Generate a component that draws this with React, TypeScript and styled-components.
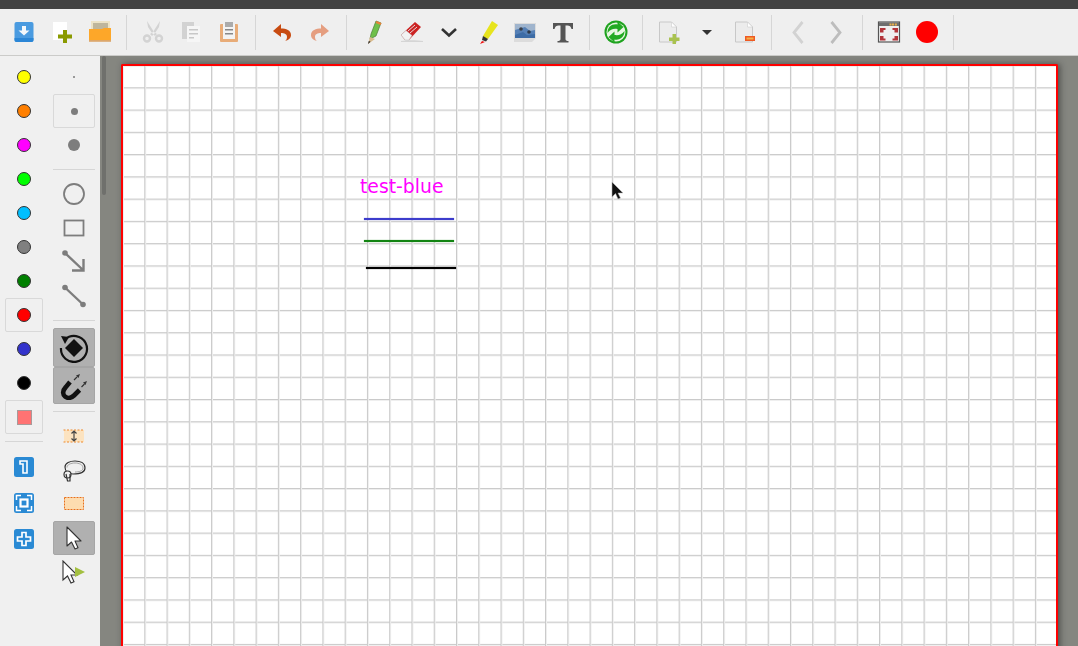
import React from "react";
import styled, { createGlobalStyle } from "styled-components";

const Global = createGlobalStyle`
  html, body { margin: 0; padding: 0; width: 1078px; height: 646px; overflow: hidden; background: #858680; }
  #root { width: 1078px; height: 646px; overflow: hidden; }
  svg { display: block; }
`;

const Page = styled.div`
  display: flex;
  flex-direction: column;
  width: 1078px;
  height: 646px;
  overflow: hidden;
  font-family: "DejaVu Sans", sans-serif;
`;
const TitleBar = styled.div`
  height: 9px;
  flex: none;
  background: #424242;
`;
const Toolbar = styled.div`
  display: flex;
  flex: none;
  height: 47px;
  box-sizing: border-box;
  padding-left: 5px;
  align-items: center;
  background: #efefef;
  border-bottom: 1px solid #cbcbc9;
`;
const ToolButton = styled.div`
  display: flex;
  flex: none;
  width: 38px;
  height: 34px;
  align-items: center;
  justify-content: center;
`;
const ToolSep = styled.div`
  flex: none;
  width: 1px;
  height: 35px;
  margin: 0 7px;
  background: #d6d6d6;
`;
const Main = styled.div`
  display: flex;
  flex: 1;
  min-height: 0;
`;
const Sidebar = styled.div`
  display: flex;
  flex: none;
  width: 100px;
  box-sizing: border-box;
  padding: 4px 0 0 5px;
  gap: 10px;
  background: #f0f0f0;
`;
const SwatchColumn = styled.div`
  display: flex;
  flex-direction: column;
  width: 38px;
`;
const ToolColumn = styled.div`
  display: flex;
  flex-direction: column;
  width: 42px;
`;
const SideButton = styled.div<{ $state?: "selected" | "active"; $h?: number }>`
  display: flex;
  flex: none;
  height: ${(p) => p.$h ?? 34}px;
  box-sizing: border-box;
  align-items: center;
  justify-content: center;
  border-radius: 2px;
  border: 1px solid
    ${(p) => (p.$state === "selected" ? "#d9d9d9" : p.$state === "active" ? "#a6a6a6" : "transparent")};
  background: ${(p) => (p.$state === "active" ? "#b0b0b0" : "transparent")};
`;
const SideSep = styled.div<{ $before: number; $after: number }>`
  flex: none;
  height: 1px;
  margin: ${(p) => p.$before}px 0 ${(p) => p.$after}px;
  background: #d6d6d6;
`;
const Swatch = styled.div<{ $color: string }>`
  width: 14.6px;
  height: 14.6px;
  box-sizing: border-box;
  border-radius: 50%;
  border: 1px solid #333;
  background: ${(p) => p.$color};
`;
const FillSwatch = styled.div`
  width: 15px;
  height: 15px;
  box-sizing: border-box;
  border: 1px solid #a89a9a;
  background: #ff7373;
`;
const Dot = styled.div<{ $size: number }>`
  width: ${(p) => p.$size}px;
  height: ${(p) => p.$size}px;
  border-radius: 50%;
  background: #7d7d7d;
`;
const Workspace = styled.div`
  position: relative;
  flex: 1;
  min-width: 0;
  box-sizing: border-box;
  padding: 8px 20px 0 21px;
  background: #858680;
`;
const ScrollThumb = styled.div`
  position: absolute;
  left: 2px;
  top: 0;
  width: 4px;
  height: 139px;
  border-radius: 2px;
  background: #6f706c;
`;
const Canvas = styled.div`
  position: relative;
  box-sizing: border-box;
  height: 640px;
  border: 2px solid #ff0000;
  border-bottom: none;
  border-radius: 2px 2px 0 0;
  box-shadow: 2px 0 6px rgba(30, 30, 30, 0.55);
  background-color: #fff;
  background-image:
    linear-gradient(to right, #c9c9c9 1px, #eeeeee 1px, #eeeeee 2px, transparent 2px),
    linear-gradient(to bottom, #c9c9c9 1px, #eeeeee 1px, #eeeeee 2px, transparent 2px);
  background-size: 22.28px 22.28px;
  background-position: -1px -1px;
`;
const CanvasText = styled.span`
  position: absolute;
  left: 237px;
  top: 109px;
  font-family: "DejaVu Sans", sans-serif;
  font-size: 18.8px;
  line-height: 24px;
  color: #ff00ff;
  white-space: nowrap;
`;
const Stroke = styled.div<{ $x: number; $y: number; $w: number; $color: string }>`
  position: absolute;
  left: ${(p) => p.$x}px;
  top: ${(p) => p.$y}px;
  width: ${(p) => p.$w}px;
  height: 2px;
  background: ${(p) => p.$color};
  box-shadow: 0 0 1px ${(p) => p.$color};
`;
const Pointer = styled.div`
  position: absolute;
  left: 488px;
  top: 116px;
`;

const I = ({ s = 24, children }: { s?: number; children: React.ReactNode }) => (
  <svg width={s} height={s} viewBox={`0 0 ${s} ${s}`} fill="none">{children}</svg>
);

const cursorPath = "M5 1 L5 20 L9.5 16 L13 23 L16 21.8 L13 15 L19 15 Z";

const icons: Record<string, React.ReactNode> = {
  save: <I><rect x="2.500" y="2" width="19" height="20" rx="2" fill="#4a9be0" /><path d="M2.500 18h19v2a2 2 0 0 1-2 2h-15a2 2 0 0 1-2-2z" fill="#2b86d6" /><path d="M10 6h4v4.500h3.500l-5.500 5-5.500-5H10z" fill="#f4f8fb" /></I>,
  newDoc: <I><rect x="3" y="2" width="14" height="18" fill="#fff" /><path d="M13 10h4v4.500h5v4h-5V23h-4v-4.500H8v-4h5z" fill="#8a9a00" /></I>,
  open: <I><path d="M3 1h19v10H3z" fill="#ece3c6" /><path d="M5 3.500h15v1H5zM5 5.500h15v1H5zM5 7.500h15v1H5z" fill="#8f8a72" /><path d="M1 9h13l2-1h7v12H1z" fill="#fda729" /><rect x="1" y="20" width="22" height="1.800" fill="#dca76b" /></I>,
  cut: <I><path d="M6 1l7 11 3 2-2 2-3-3-4-6zM19 1l-7 11-3 2 2 2 3-3 4-6z" fill="#d3d3d3" /><circle cx="6" cy="18.500" r="3" stroke="#d3d3d3" strokeWidth="2.400" /><circle cx="18" cy="18.500" r="3" stroke="#d3d3d3" strokeWidth="2.400" /></I>,
  copy: <I><rect x="3" y="2" width="12" height="17" fill="#d2d2d2" /><rect x="8" y="6" width="13" height="16" fill="#f6f6f6" /><path d="M10 9h9v1.500h-9zM10 13h9v1.500h-9zM10 17h5v1.500h-5z" fill="#c8c8c8" /></I>,
  paste: <I><rect x="3" y="4" width="18" height="18" rx="1" fill="#e8ac78" /><rect x="6" y="4" width="12" height="15" fill="#f3f3f3" /><rect x="8" y="2" width="8" height="5" fill="#ababab" /><path d="M8 9h8v1.500H8zM8 13h8v1.500H8z" fill="#888" /></I>,
  undo: <I><path d="M11 4L3 11l8 6v-4c3.500 0 6 1 6 4 0 1.500-.5 3-2 4 4.500-1 6-3.500 6-6 0-5-5-6.500-10-6.500z" fill="#c84b11" /></I>,
  redo: <I><path d="M13 4l8 7-8 6v-4c-3.500 0-6 1-6 4 0 1.500.5 3 2 4-4.500-1-6-3.500-6-6 0-5 5-6.500 10-6.500z" fill="#e59e80" /></I>,
  pencil: <I><path d="M9 19l1-5 5-13 5 2-5 13z" fill="#6fc04a" stroke="#4d7d38" strokeWidth=".7" /><path d="M15.500 1l5 2-.8 2-5-2z" fill="#e8823a" /><path d="M7 24l2-7 5 2z" fill="#d9bb8e" /><path d="M7 24l.8-3 1.800.7z" fill="#222" /></I>,
  eraser: <I><path d="M2 21c6-1 16-1 22 0v1H2z" fill="#d5d5d5" /><path d="M2 15L16 2l6 5-12 13H6z" fill="#cc2222" /><path d="M2 15l5-4.500 6 5L10 20H6z" fill="#f2f2f2" stroke="#bbb" strokeWidth=".5" /><path d="M9 11l7-6M11 13l7-6" stroke="#e9dcdc" strokeWidth="1" /></I>,
  chevronDown: <I s={18}><path d="M2 6l7 6.500L16 6" stroke="#333" strokeWidth="2.600" /></I>,
  marker: <I><path d="M8 16L17 1l6 4-10 14-3-1z" fill="#e7e41d" /><path d="M8 16l5 3-2 2.500-4-1.500z" fill="#333" /><path d="M5 24l2-3 3 1z" fill="#f01010" /></I>,
  image: <I><path d="M1 3h22v15l-4 4H1z" fill="#dcdcdc" /><rect x="2" y="4" width="20" height="14" fill="#5580b6" /><path d="M2 4h20v6l-5 1-5-4-10 3z" fill="#9fb4cd" /><circle cx="8" cy="9" r="1.800" fill="#3a3f48" /><circle cx="16" cy="12" r="1.800" fill="#2e3a4a" /><path d="M2 15l8-3 4 3 8-1v4H2z" fill="#3d6ca6" /></I>,
  text: <I><path d="M2 9V3h20v6h-1.500c-.5-2.500-2-3.500-4-3.500h-2V19c0 1.500 1 2 3 2v1.500H6.500V21c2 0 3-.5 3-2V5.500h-2c-2 0-3.500 1-4 3.500z" fill="#555" /></I>,
  refresh: <I><circle cx="12" cy="12" r="11.500" fill="#1fa31f" /><circle cx="12" cy="12" r="9.500" fill="#e8f6e2" /><path d="M3.500 13c0-6 4.500-9.500 10-8.500V1.500l6 5.500-6 5.500V9c-4-.5-7 0-10 4zM20.500 11c0 6-4.500 9.500-10 8.500v3l-6-5.500 6-5.500V15c4 .5 7 0 10-4z" fill="#22aa22" /></I>,
  pageAdd: <I><path d="M2.500 2h12l5 5v15h-17z" fill="#ececec" stroke="#c8c8c8" /><path d="M14.500 2v5h5z" fill="#fff" stroke="#cfcfcf" strokeWidth=".6" /><path d="M15.500 14H19v3.500h3.500V21H19v3h-3.500v-3H12v-3.500h3.500z" fill="#a9c24f" /></I>,
  caret: <I s={14}><path d="M2 5h10L7 10z" fill="#333" /></I>,
  pageRemove: <I><path d="M2.500 2h12l5 5v15h-17z" fill="#ececec" stroke="#c8c8c8" /><path d="M14.500 2v5h5z" fill="#fff" stroke="#cfcfcf" strokeWidth=".6" /><rect x="12" y="16" width="10" height="5" fill="#ef5a22" /><rect x="13.500" y="17.500" width="7" height="2" fill="#f3b14a" /></I>,
  prev: <I><path d="M16.500 2L8 12.500 16.500 23" stroke="#d2d2d2" strokeWidth="2.800" /></I>,
  next: <I><path d="M7.500 2L16 12.500 7.500 23" stroke="#bdbdbd" strokeWidth="2.800" /></I>,
  fullscreen: <I><rect x="1.500" y="2" width="21" height="20" fill="#efefef" stroke="#555" strokeWidth="1.200" /><rect x="2" y="2.500" width="20" height="3.500" fill="#6e6e6e" /><path d="M15 3.500h2v2h-2zM17.800 3.500h2v2h-2zM12.500 3.500h2v2h-2z" fill="#e9b04a" /><path d="M3 8h5.500v2H6.500v2.500H3zM21 8h-5.500v2h2v2.500H21zM3 20.500h5.500v-2H6.500V16H3zM21 20.500h-5.500v-2h2V16H21z" fill="#b3353a" /></I>,
  record: <svg width="22" height="22" viewBox="0 0 22 22"><circle cx="11" cy="11" r="11" fill="#ff0000" /></svg>,
};

const R = ({ children }: { children: React.ReactNode }) => (
  <svg width="24" height="24" viewBox="0 0 24 24" fill="none">{children}</svg>
);

const tools: Record<string, React.ReactNode> = {
  circle: <R><circle cx="12" cy="12" r="10" stroke="#7d7d7d" strokeWidth="1.800" /></R>,
  rect: <R><rect x="2.500" y="4.500" width="19" height="15" stroke="#7d7d7d" strokeWidth="1.800" /></R>,
  arrow: <R><circle cx="3" cy="3" r="2.800" fill="#7d7d7d" /><path d="M3 3l18 17M21.500 9v11.500H10" stroke="#7d7d7d" strokeWidth="2.400" /></R>,
  line: <R><circle cx="3" cy="3.500" r="2.800" fill="#7d7d7d" /><circle cx="21" cy="20.500" r="2.800" fill="#7d7d7d" /><path d="M3 3.500l18 17" stroke="#7d7d7d" strokeWidth="2.400" /></R>,
  rotate: <svg width="30" height="30" viewBox="0 0 30 30" fill="none"><path d="M6 6.500A13 13 0 1 1 2 15" stroke="#111" strokeWidth="2.200" /><path d="M2 3l8 1-4 7z" fill="#111" /><path d="M15 6l9 9-9 9-9-9z" fill="#111" /></svg>,
  magnet: <svg width="28" height="28" viewBox="0 0 28 28" fill="none"><path d="M10 10L5.500 15.500C2 19 3 23 5 24.500 7.500 26.500 11 26.500 14 23.500L19.500 18" stroke="#111" strokeWidth="4.600" /><path d="M14 8l3-3M21.500 15l3-3" stroke="#333" strokeWidth="1.200" /><path d="M20 2l-1.500 4-2.500-2.500zM27 9l-1.500 4-2.500-2.500z" fill="#333" /></svg>,
  resize: <svg width="22" height="14" viewBox="0 0 22 14" fill="none"><rect x="1" y="1" width="20" height="12" fill="#fce3c0" /><path d="M0.500 1h21M0.500 13h21" stroke="#ef8a2c" strokeDasharray="2 1.500" /><path d="M11 2v10M8.500 4.500L11 2l2.500 2.500M8.500 9.500L11 12l2.500-2.500" stroke="#444" strokeWidth="1.200" /></svg>,
  lasso: <R><path d="M3 9C3 5 8 3 13 3s10 2 10 7-6 6-12 6c-4 0-8-2-8-7z" stroke="#333" strokeWidth="1.200" /><path d="M5 9.500C5 6.500 9 5 13 5s8 1.500 8 5c0 3-4 4-8 4" stroke="#999" strokeWidth=".9" /><circle cx="5.500" cy="16.500" r="3.500" stroke="#333" strokeWidth="1.200" fill="#f0f0f0" /><path d="M4 16l1.500 7h2.500L8 16" stroke="#333" strokeWidth="1.200" /></R>,
  marquee: <svg width="20" height="14" viewBox="0 0 20 14"><rect x=".5" y=".5" width="19" height="12" fill="#fddcb0" stroke="#e8701a" strokeDasharray="2 1" /></svg>,
  select: <R><path d={cursorPath} fill="#fff" stroke="#333" strokeWidth="1.100" strokeLinejoin="round" /></R>,
  play: <svg width="24" height="24" viewBox="0 0 24 24"><path d={cursorPath} fill="#fff" stroke="#333" strokeWidth="1.100" transform="translate(-4 0)" /><path d="M13 7l10 5-10 5z" fill="#a3bf41" /></svg>,
};

const blue = (inner: React.ReactNode) => (
  <svg width="20" height="20" viewBox="0 0 20 20" fill="none">
    <rect width="20" height="20" rx="2.500" fill="#2a8ad4" />
    {inner}
  </svg>
);

const Layout1 = () => blue(<path d="M6 4h7v12H9V7H6z" stroke="#fff" strokeWidth="1.600" />);
const Layout2 = () => blue(<><path d="M2.500 7V2.500H7M13 2.500h4.500V7M17.500 13v4.500H13M7 17.500H2.500V13" stroke="#fff" strokeWidth="1.500" /><rect x="6.500" y="6.500" width="7" height="7" stroke="#fff" strokeWidth="2.200" /></>);
const Layout3 = () => blue(<path d="M8 3.500h4V8h4.500v4H12v4.500H8V12H3.500V8H8z" stroke="#fff" strokeWidth="1.700" />);

const swatches = ["#ffff00", "#ff7f00", "#ff00ff", "#00ff00", "#00bfff", "#808080", "#008000", "#ff0000", "#3333cc", "#000000"];

const bar: (string | null)[] = [
  "save", "newDoc", "open", null, "cut", "copy", "paste", null, "undo", "redo", null,
  "pencil", "eraser", "chevronDown", "marker", "image", "text", null, "refresh", null,
  "pageAdd", "caret", "pageRemove", null, "prev", "next", null, "fullscreen", "record", null,
];

export default function App() {
  return (
    <Page>
      <Global />
      <TitleBar />
      <Toolbar>
        {bar.map((name, i) =>
          name ? <ToolButton key={i}>{icons[name]}</ToolButton> : <ToolSep key={i} />
        )}
      </Toolbar>
      <Main>
        <Sidebar>
          <SwatchColumn>
            {swatches.map((c) => (
              <SideButton key={c} $state={c === "#ff0000" ? "selected" : undefined}>
                <Swatch $color={c} />
              </SideButton>
            ))}
            <SideButton $state="selected"><FillSwatch /></SideButton>
            <SideSep $before={7} $after={7} />
            <SideButton $h={36}><Layout1 /></SideButton>
            <SideButton $h={36}><Layout2 /></SideButton>
            <SideButton $h={36}><Layout3 /></SideButton>
          </SwatchColumn>
          <ToolColumn>
            <SideButton><Dot $size={2} /></SideButton>
            <SideButton $state="selected"><Dot $size={7} /></SideButton>
            <SideButton><Dot $size={12} /></SideButton>
            <SideSep $before={7} $after={7} />
            <SideButton>{tools.circle}</SideButton>
            <SideButton>{tools.rect}</SideButton>
            <SideButton>{tools.arrow}</SideButton>
            <SideButton>{tools.line}</SideButton>
            <SideSep $before={7} $after={7} />
            <SideButton $state="active" $h={39}>{tools.rotate}</SideButton>
            <SideButton $state="active" $h={37}>{tools.magnet}</SideButton>
            <SideSep $before={7} $after={7} />
            <SideButton>{tools.resize}</SideButton>
            <SideButton>{tools.lasso}</SideButton>
            <SideButton>{tools.marquee}</SideButton>
            <SideButton $state="active">{tools.select}</SideButton>
            <SideButton>{tools.play}</SideButton>
          </ToolColumn>
        </Sidebar>
        <Workspace>
          <ScrollThumb />
          <Canvas>
            <CanvasText>test-blue</CanvasText>
            <Stroke $x={241} $y={152} $w={90} $color="#3c3ccc" />
            <Stroke $x={241} $y={174} $w={90} $color="#128412" />
            <Stroke $x={243} $y={201} $w={90} $color="#000000" />
            <Pointer>
              <svg width="14" height="20" viewBox="0 0 14 20">
                <path d="M1 0v15l3.500-3.500L7 17l2.500-1-2.500-5h5z" fill="#111" stroke="#bbb" strokeWidth=".5" />
              </svg>
            </Pointer>
          </Canvas>
        </Workspace>
      </Main>
    </Page>
  );
}
